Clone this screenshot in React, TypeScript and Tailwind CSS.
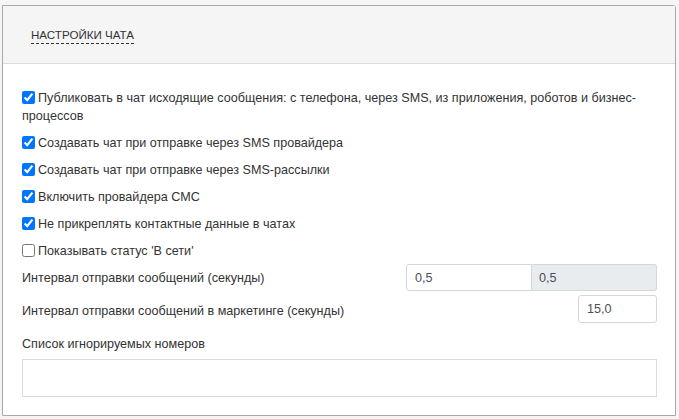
import React from "react";

const options = [
  { label: "Публиковать в чат исходящие сообщения: с телефона, через SMS, из приложения, роботов и бизнес-процессов", checked: true },
  { label: "Создавать чат при отправке через SMS провайдера", checked: true },
  { label: "Создавать чат при отправке через SMS-рассылки", checked: true },
  { label: "Включить провайдера СМС", checked: true },
  { label: "Не прикреплять контактные данные в чатах", checked: true },
  { label: "Показывать статус 'В сети'", checked: false },
];

export default function App() {
  return (
    <div
      className="w-[679px] h-[419px] bg-[#f5f5f5] overflow-hidden pt-[5px] pl-[2px] text-[12.6px] text-[#333]"
      style={{ fontFamily: "Arial, 'Liberation Sans', sans-serif" }}
    >
      <div className="w-[674px] h-[411px] bg-white border border-[#a8a8a8] rounded-tr-[3px] flex flex-col">
        {/* Header */}
        <div className="h-[58px] shrink-0 bg-[#f5f5f5] border-b border-[#dcdcdc] flex items-center pl-[28px]">
          <span className="text-[11.6px] uppercase leading-[16px] border-b border-dashed border-[#333] mt-[1px]">
            Настройки чата
          </span>
        </div>

        {/* Body */}
        <div className="flex-1 pl-[19px] pr-[18px] pt-[25px]">
          <div className="flex flex-col gap-[9px]">
            {options.map((o, i) => (
              <label key={i} className="block leading-[18px]">
                <input
                  type="checkbox"
                  defaultChecked={o.checked}
                  className="inline-block align-[-2px] w-[13px] h-[13px] mr-[3px] accent-[#0075ff]"
                />
                {o.label}
              </label>
            ))}
          </div>

          <div className="mt-[4px] flex items-center h-[27px]">
            <span className="flex-1 mt-[1px]">Интервал отправки сообщений (секунды)</span>
            <input
              defaultValue="0,5"
              className="w-[126px] h-[27px] border border-[#d4d8dc] rounded-l-[3px] px-[8px] text-[#495057] outline-none"
            />
            <input
              defaultValue="0,5"
              disabled
              className="w-[125px] h-[27px] border border-l-0 border-[#d4d8dc] bg-[#e9ecef] rounded-r-[3px] px-[7px] text-[#495057] outline-none"
            />
          </div>

          <div className="mt-[4px] flex items-center h-[27px]">
            <span className="flex-1 mt-[5px]">Интервал отправки сообщений в маркетинге (секунды)</span>
            <input
              defaultValue="15,0"
              className="w-[79px] h-[28px] border border-[#d4d8dc] rounded-[3px] px-[8px] text-[#495057] outline-none"
            />
          </div>

          <div className="mt-[13px] leading-[18px]">Список игнорируемых номеров</div>
          <textarea className="mt-[6px] w-[635px] h-[38px] border border-[#dcdcdc] resize-none outline-none block" />
        </div>
      </div>
    </div>
  );
}
